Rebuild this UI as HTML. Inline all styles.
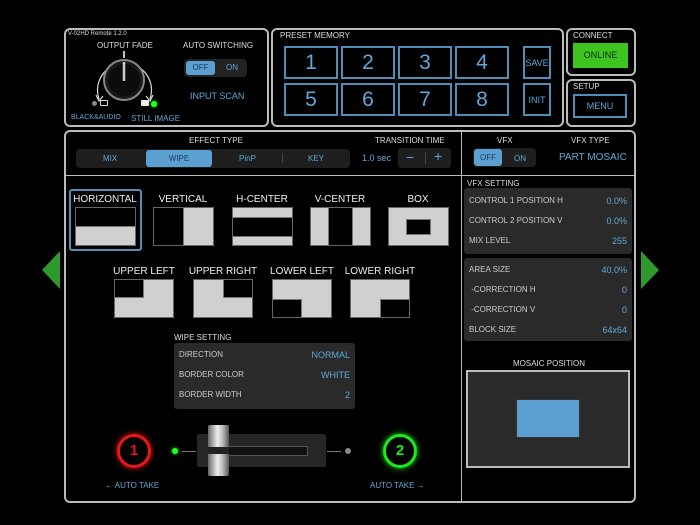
<!DOCTYPE html>
<html><head><meta charset="utf-8"><style>
*{margin:0;padding:0;box-sizing:border-box}
body{width:700px;height:525px;background:#000;position:relative;overflow:hidden;font-family:"Liberation Sans",sans-serif;color:#ccc}
.a{position:absolute}
.pn{position:absolute;border:2px solid #bbb;border-radius:6px}
.t{position:absolute;font-size:8px;color:#ddd;white-space:nowrap}
.bl{color:#5fa8d8}
.pb{position:absolute;border:2px solid #4e8fb8;color:#5fa8d8;display:flex;align-items:center;justify-content:center}
.tile{position:absolute;background:#d0d0d0;border:1px solid #666;overflow:hidden}
.blk{position:absolute;background:#000;border:1px solid #777}
.lbl{position:absolute;font-size:10px;color:#eee;text-align:center;width:90px}
.row{position:absolute;left:5px;right:5px;font-size:8px;color:#ccc;display:flex;justify-content:space-between}
.row b{font-weight:normal;color:#5fa8d8;font-size:9px}
.pb.n{font-size:21px}
</style></head><body>
<svg class="a" style="left:0;top:0" width="700" height="525">
<polygon points="60,251 60,289 42,270" fill="#2e9a2e"/>
<polygon points="641,251 641,289 659,270" fill="#2e9a2e"/>
</svg>

<div class="pn" style="left:64px;top:28px;width:205px;height:99px"></div>
<div class="t" style="left:68px;top:31px;font-size:6px">V-02HD Remote 1.2.0</div>
<div class="t" style="left:97px;top:41px">OUTPUT FADE</div>
<svg class="a" style="left:85px;top:50px" width="80" height="60">
<path d="M14 49 A27 27 0 1 1 65 49" fill="none" stroke="#ddd" stroke-width="1.2"/>
<path d="M11 45 l3 6 l4 -5 M68 45 l-3 6 l-4 -5" fill="none" stroke="#ddd" stroke-width="1.2"/>
<line x1="39" y1="1" x2="39" y2="8" stroke="#fff" stroke-width="1.5"/>
<circle cx="39" cy="30" r="20" fill="#1a1a1a" stroke="#888" stroke-width="2"/>
<circle cx="39" cy="30" r="16" fill="#0c0c0c"/>
<line x1="39" y1="12" x2="39" y2="31" stroke="#ccc" stroke-width="2.5"/>
</svg>
<div class="a" style="left:92px;top:101px;width:5px;height:5px;border-radius:50%;background:#888"></div>
<div class="a" style="left:100px;top:100px;width:8px;height:6px;border:1px solid #ddd;border-radius:1px"></div>
<div class="a" style="left:141px;top:100px;width:8px;height:6px;background:#eee;border-radius:1px"></div>
<div class="a" style="left:151px;top:101px;width:6px;height:6px;border-radius:50%;background:#2f2;box-shadow:0 0 3px #2f2"></div>
<div class="t bl" style="left:71px;top:114px;font-size:7px">BLACK&amp;AUDIO</div>
<div class="t bl" style="left:131px;top:114px">STILL IMAGE</div>
<div class="t" style="left:183px;top:41px">AUTO SWITCHING</div>
<div class="a" style="left:184px;top:59px;width:63px;height:18px;background:#222;border-radius:4px"></div>
<div class="a" style="left:186px;top:61px;width:29px;height:14px;background:#5ba0d0;border-radius:3px;font-size:8px;color:#1a3a55;text-align:center;line-height:14px">OFF</div>
<div class="t bl" style="left:226px;top:63px">ON</div>
<div class="t bl" style="left:190px;top:91px;font-size:9px">INPUT SCAN</div>

<div class="pn" style="left:271px;top:28px;width:293px;height:99px"></div>
<div class="t" style="left:280px;top:31px">PRESET MEMORY</div>
<div class="pb n" style="left:284px;top:46px;width:54px;height:33px">1</div>
<div class="pb n" style="left:341px;top:46px;width:54px;height:33px">2</div>
<div class="pb n" style="left:398px;top:46px;width:54px;height:33px">3</div>
<div class="pb n" style="left:455px;top:46px;width:54px;height:33px">4</div>
<div class="pb n" style="left:284px;top:83px;width:54px;height:33px">5</div>
<div class="pb n" style="left:341px;top:83px;width:54px;height:33px">6</div>
<div class="pb n" style="left:398px;top:83px;width:54px;height:33px">7</div>
<div class="pb n" style="left:455px;top:83px;width:54px;height:33px">8</div>
<div class="pb" style="left:523px;top:46px;width:28px;height:33px;font-size:9px">SAVE</div>
<div class="pb" style="left:523px;top:83px;width:28px;height:33px;font-size:9px">INIT</div>

<div class="pn" style="left:566px;top:28px;width:70px;height:48px"></div>
<div class="t" style="left:573px;top:31px">CONNECT</div>
<div class="a" style="left:573px;top:43px;width:55px;height:25px;background:#3ec41e;color:#0a300a;font-size:9px;text-align:center;line-height:25px">ONLINE</div>
<div class="pn" style="left:566px;top:79px;width:70px;height:48px"></div>
<div class="t" style="left:573px;top:82px">SETUP</div>
<div class="pb" style="left:573px;top:94px;width:54px;height:24px;font-size:9px">MENU</div>

<div class="pn" style="left:64px;top:130px;width:572px;height:373px"></div>
<div class="a" style="left:65px;top:175px;width:570px;height:1px;background:#bbb"></div>
<div class="a" style="left:461px;top:131px;width:1px;height:370px;background:#bbb"></div>

<div class="t" style="left:189px;top:136px">EFFECT TYPE</div>
<div class="a" style="left:76px;top:149px;width:274px;height:19px;background:#1e1e1e;border-radius:4px"></div>
<div class="a" style="left:146px;top:150px;width:66px;height:17px;background:#5ba0d0;border-radius:3px;font-size:8px;color:#1a3a55;text-align:center;line-height:17px">WIPE</div>
<div class="t bl" style="left:103px;top:154px">MIX</div>
<div class="t bl" style="left:239px;top:154px">PinP</div>
<div class="a" style="left:282px;top:153px;width:1px;height:10px;background:#444"></div>
<div class="t bl" style="left:308px;top:154px">KEY</div>
<div class="t" style="left:375px;top:136px">TRANSITION TIME</div>
<div class="t bl" style="left:362px;top:153px;font-size:9px">1.0 sec</div>
<div class="a" style="left:398px;top:148px;width:53px;height:20px;background:#1e1e1e;border-radius:3px"></div>
<div class="a" style="left:425px;top:152px;width:1px;height:12px;background:#444"></div>
<div class="t bl" style="left:406px;top:149px;font-size:14px">−</div>
<div class="t bl" style="left:434px;top:148px;font-size:14px">+</div>

<div class="t" style="left:497px;top:136px">VFX</div>
<div class="t" style="left:571px;top:136px">VFX TYPE</div>
<div class="a" style="left:473px;top:148px;width:63px;height:19px;background:#1e1e1e;border-radius:4px"></div>
<div class="a" style="left:474px;top:149px;width:28px;height:17px;background:#5ba0d0;border-radius:3px;font-size:8px;color:#1a3a55;text-align:center;line-height:17px">OFF</div>
<div class="t bl" style="left:514px;top:154px">ON</div>
<div class="t bl" style="left:559px;top:152px;font-size:10px">PART MOSAIC</div>

<div class="a" style="left:69px;top:189px;width:73px;height:62px;border:2px solid #4e8fb8;border-radius:3px"></div>
<div class="lbl" style="left:60px;top:194px">HORIZONTAL</div>
<div class="tile" style="left:75px;top:207px;width:61px;height:39px"><div class="blk" style="left:-1px;top:-1px;width:61px;height:20px"></div></div>
<div class="lbl" style="left:138px;top:194px">VERTICAL</div>
<div class="tile" style="left:153px;top:207px;width:61px;height:39px"><div class="blk" style="left:-1px;top:-1px;width:31px;height:39px"></div></div>
<div class="lbl" style="left:217px;top:194px">H-CENTER</div>
<div class="tile" style="left:232px;top:207px;width:61px;height:39px"><div class="blk" style="left:-1px;top:9px;width:61px;height:20px"></div></div>
<div class="lbl" style="left:295px;top:194px">V-CENTER</div>
<div class="tile" style="left:310px;top:207px;width:61px;height:39px"><div class="blk" style="left:17px;top:-1px;width:25px;height:39px"></div></div>
<div class="lbl" style="left:373px;top:194px">BOX</div>
<div class="tile" style="left:388px;top:207px;width:61px;height:39px"><div class="blk" style="left:17px;top:11px;width:25px;height:16px"></div></div>

<div class="lbl" style="left:99px;top:266px">UPPER LEFT</div>
<div class="tile" style="left:114px;top:279px;width:60px;height:39px"><div class="blk" style="left:-1px;top:-1px;width:30px;height:19px"></div></div>
<div class="lbl" style="left:178px;top:266px">UPPER RIGHT</div>
<div class="tile" style="left:193px;top:279px;width:60px;height:39px"><div class="blk" style="left:29px;top:-1px;width:30px;height:19px"></div></div>
<div class="lbl" style="left:257px;top:266px">LOWER LEFT</div>
<div class="tile" style="left:272px;top:279px;width:60px;height:39px"><div class="blk" style="left:-1px;top:19px;width:30px;height:19px"></div></div>
<div class="lbl" style="left:335px;top:266px">LOWER RIGHT</div>
<div class="tile" style="left:350px;top:279px;width:60px;height:39px"><div class="blk" style="left:29px;top:19px;width:30px;height:19px"></div></div>

<div class="t" style="left:174px;top:333px">WIPE SETTING</div>
<div class="a" style="left:174px;top:343px;width:181px;height:66px;background:#2a2a2a;border-radius:3px">
<div class="row" style="top:7px">DIRECTION<b>NORMAL</b></div>
<div class="row" style="top:27px">BORDER COLOR<b>WHITE</b></div>
<div class="row" style="top:47px">BORDER WIDTH<b>2</b></div>
</div>

<div class="a" style="left:117px;top:434px;width:34px;height:34px;border-radius:50%;border:3px solid #e81818;box-shadow:0 0 6px #e81818;color:#e81818;font-size:15px;font-weight:bold;text-align:center;line-height:28px">1</div>
<div class="a" style="left:383px;top:434px;width:34px;height:34px;border-radius:50%;border:3px solid #1ee81e;box-shadow:0 0 6px #1ee81e;color:#1ee81e;font-size:15px;font-weight:bold;text-align:center;line-height:28px">2</div>
<div class="a" style="left:172px;top:448px;width:6px;height:6px;border-radius:50%;background:#2f2;box-shadow:0 0 3px #2f2"></div>
<div class="a" style="left:182px;top:451px;width:14px;height:1px;background:#777"></div>
<div class="a" style="left:197px;top:434px;width:129px;height:33px;background:#262626;border-radius:2px"></div>
<div class="a" style="left:208px;top:446px;width:100px;height:10px;background:#111;border:1px solid #555"></div>
<div class="a" style="left:327px;top:451px;width:14px;height:1px;background:#777"></div>
<div class="a" style="left:345px;top:448px;width:6px;height:6px;border-radius:50%;background:#888"></div>
<div class="a" style="left:208px;top:425px;width:21px;height:51px;border-radius:2px;background:linear-gradient(90deg,#666,#eee 45%,#bbb 70%,#555)"></div>
<div class="a" style="left:208px;top:447px;width:21px;height:7px;background:#222"></div>
<div class="t bl" style="left:105px;top:481px">← AUTO TAKE</div>
<div class="t bl" style="left:370px;top:481px">AUTO TAKE →</div>

<div class="t" style="left:467px;top:179px">VFX SETTING</div>
<div class="a" style="left:464px;top:188px;width:168px;height:66px;background:#2a2a2a;border-radius:3px">
<div class="row" style="top:8px">CONTROL 1 POSITION H<b>0.0%</b></div>
<div class="row" style="top:28px">CONTROL 2 POSITION V<b>0.0%</b></div>
<div class="row" style="top:48px">MIX LEVEL<b>255</b></div>
</div>
<div class="a" style="left:464px;top:258px;width:168px;height:83px;background:#2a2a2a;border-radius:3px">
<div class="row" style="top:7px">AREA SIZE<b>40.0%</b></div>
<div class="row" style="top:27px">&nbsp;-CORRECTION H<b>0</b></div>
<div class="row" style="top:47px">&nbsp;-CORRECTION V<b>0</b></div>
<div class="row" style="top:67px">BLOCK SIZE<b>64x64</b></div>
</div>
<div class="t" style="left:513px;top:359px">MOSAIC POSITION</div>
<div class="a" style="left:466px;top:370px;width:164px;height:98px;background:#2a2a2a;border:2px solid #bbb"></div>
<div class="a" style="left:516px;top:399px;width:64px;height:39px;background:#5ba0d0;border:1px solid #333"></div>
</body></html>
